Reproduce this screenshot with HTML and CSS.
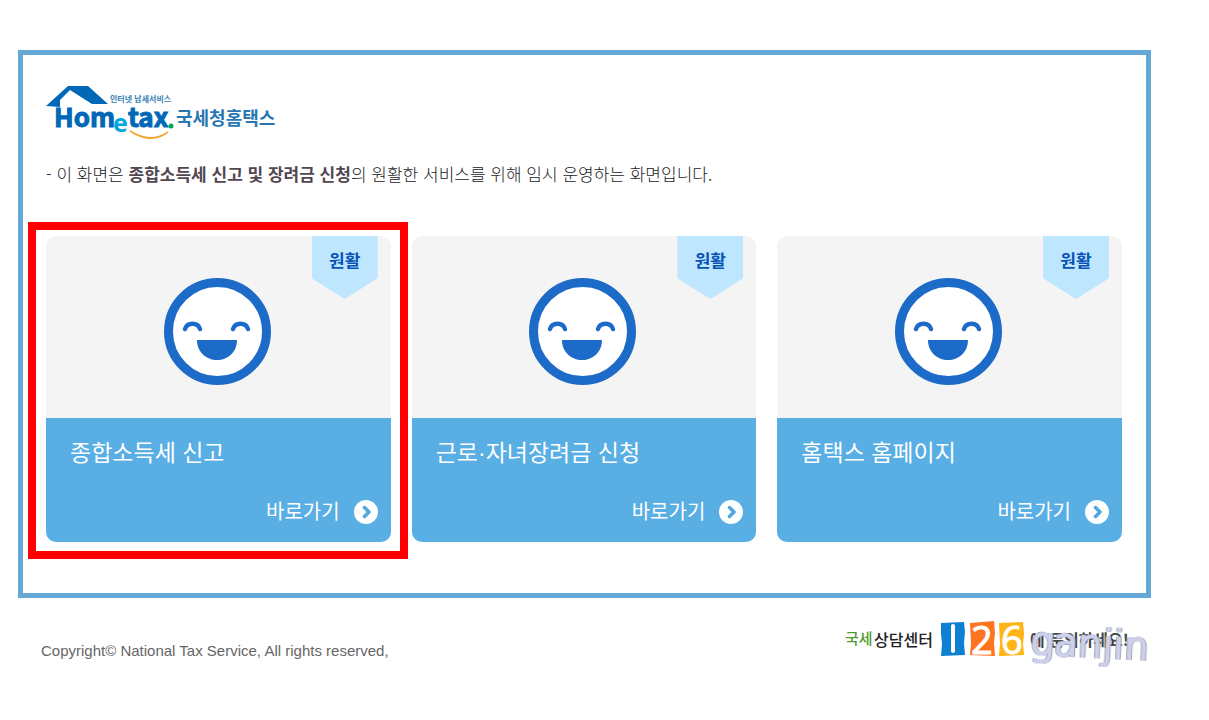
FILE: index.html
```html
<!DOCTYPE html>
<html lang="ko">
<head>
<meta charset="utf-8">
<meta name="viewport" content="width=device-width, initial-scale=1">
<title>국세청 홈택스</title>
<link rel="stylesheet" href="styles.css">
</head>
<body>
<svg class="defs" aria-hidden="true">
  <symbol id="smile" viewBox="0 0 107 107">
    <circle cx="53.5" cy="53.5" r="49" fill="#fff" stroke="#1c6bc8" stroke-width="9"/>
    <path d="M21 51c2-7 13-7 15 0M69 51c2-7 13-7 15 0" fill="none" stroke="#1c6bc8" stroke-width="4.500" stroke-linecap="round"/>
    <path d="M33 62h40c0 12-9 20-20 20s-20-8-20-20z" fill="#1c6bc8"/>
  </symbol>
  <symbol id="go" viewBox="0 0 24 24">
    <circle cx="12" cy="12" r="12" fill="#fff"/>
    <path d="M10.500 7.500l4.500 4.500-4.500 4.500" fill="none" stroke="#4fa8df" stroke-width="3.500" stroke-linecap="round" stroke-linejoin="round"/>
  </symbol>
</svg>
<main class="frame">
  <h1 class="logo">
    <svg class="logo-art" viewBox="0 0 230 56" role="img" aria-label="Hometax 국세청홈택스">
      <path d="M0 21L22 1H42L62 19H46L24 5L14 15V22z" fill="#0068b7"/>
      <text x="8" y="42" class="logo-en">Hom</text>
      <text x="67" y="47" class="logo-e">e</text>
      <text x="82" y="42" class="logo-en">tax</text>
      <circle cx="125" cy="41" r="2.500" fill="#00a651"/>
      <path d="M84 46q20 13 38 1q-16 13-38-1z" fill="#f2a32c" stroke="#f2a32c" stroke-width="1.500"/>
      <text x="64" y="17" class="logo-tag">인터넷 납세서비스</text>
      <text x="130" y="40" class="logo-ko">국세청홈택스</text>
    </svg>
  </h1>
  <p class="notice">- 이 화면은 <strong>종합소득세 신고 및 장려금 신청</strong>의 원활한 서비스를 위해 임시 운영하는 화면입니다.</p>
  <ul class="cards">
    <li class="card marked">
      <div class="status"><svg class="face" aria-hidden="true"><use href="#smile"/></svg><span class="badge">원활</span></div>
      <div class="body"><h2 class="title">종합소득세 신고</h2><a class="link" href="#">바로가기<svg class="arrow" aria-hidden="true"><use href="#go"/></svg></a></div>
    </li>
    <li class="card">
      <div class="status"><svg class="face" aria-hidden="true"><use href="#smile"/></svg><span class="badge">원활</span></div>
      <div class="body"><h2 class="title">근로·자녀장려금 신청</h2><a class="link" href="#">바로가기<svg class="arrow" aria-hidden="true"><use href="#go"/></svg></a></div>
    </li>
    <li class="card">
      <div class="status"><svg class="face" aria-hidden="true"><use href="#smile"/></svg><span class="badge">원활</span></div>
      <div class="body"><h2 class="title">홈택스 홈페이지</h2><a class="link" href="#">바로가기<svg class="arrow" aria-hidden="true"><use href="#go"/></svg></a></div>
    </li>
  </ul>
</main>
<footer class="footer">
  <p class="copy">Copyright© National Tax Service, All rights reserved,</p>
  <svg class="center" viewBox="0 0 308 52" role="img" aria-label="국세상담센터 126에 문의하세요!">
    <text x="2" y="26" class="hand green">국세</text>
    <text x="31" y="28" class="hand">상담센터</text>
    <path d="M98 5l23-1 1 10-1 11 1 12-24 1 1-12-1-10z" fill="#0d80d3"/>
    <path d="M127 5l24-2 1 12-1 10 1 13-25-1 1-12z" fill="#ff7420"/>
    <path d="M156 5l24-1 1 12-1 10 1 11-25 1 1-13z" fill="#ffb515"/>
    <path d="M110 8v25" class="digit-bar"/>
    <text x="128" y="36" class="digit">2</text>
    <text x="158" y="36" class="digit">6</text>
    <text x="187" y="28" class="ask">에 문의하세요!</text>
    <text x="187" y="36" class="mark" transform="rotate(3 187 36)">ganjin</text>
  </svg>
</footer>
</body>
</html>
```
FILE: styles.css
```css
* { box-sizing: border-box; }
body {
  margin: 0;
  padding: 50px 58px 40px 18px;
  background: #fff;
  color: #444;
  font-family: "Liberation Sans", "Noto Sans CJK KR", sans-serif;
}
.defs { position: absolute; width: 0; height: 0; }
.frame { border: 5px solid #65a8d5; padding: 30px 24px 51px 23px; }
.logo { margin: 0; line-height: 0; }
.logo-art { width: 230px; height: 56px; overflow: visible; }
.logo-en { font: bold 26px "Noto Sans CJK KR", sans-serif; fill: #0068b7; stroke: #0068b7; stroke-width: 1; }
.logo-e { font: bold 25px "Open Sans", sans-serif; fill: #00a5e3; }
.logo-tag { font: bold 8px "Noto Sans CJK KR", sans-serif; fill: #3b83b5; }
.logo-ko { font: bold 18px "Noto Sans CJK KR", sans-serif; fill: #2876b2; }
.notice { margin: 21px 0 0; color: #222; font-size: 17px; line-height: 24px; font-family: "Noto Sans CJK KR", sans-serif; font-weight: 300; }
.notice strong { font-weight: 700; color: #524650; }
.cards {
  display: grid;
  grid-template-columns: repeat(3, minmax(0, 1fr));
  gap: 21px;
  margin: 50px 0 0;
  padding: 0;
  list-style: none;
}
.card { position: relative; }
.marked::after { content: ""; position: absolute; inset: -14px -17px -17px -18px; border: 8px solid #f00; pointer-events: none; }
.status {
  position: relative;
  display: flex;
  justify-content: center;
  padding: 42px 2px 33px 0;
  border-radius: 10px 10px 0 0;
  background: #f4f4f4;
}
.face { width: 107px; height: 107px; }
.badge {
  position: absolute;
  top: 0;
  right: 13px;
  width: 66px;
  height: 63px;
  padding-top: 14px;
  background: #bfe6ff;
  clip-path: polygon(0 0, 100% 0, 100% 67%, 50% 100%, 0 67%);
  color: #0753b5;
  font-size: 17px;
  font-weight: 700;
  line-height: 24px;
  text-align: center;
}
.body {
  display: flex;
  flex-direction: column;
  padding: 19px 13px 16px 24px;
  border-radius: 0 0 10px 10px;
  background: #59aee4;
  color: #fff;
}
.title { margin: 0; font-size: 23px; font-weight: 400; line-height: 32px; }
.link {
  display: flex;
  align-items: center;
  align-self: flex-end;
  gap: 14px;
  margin-top: 29px;
  color: #fff;
  font-size: 20px;
  line-height: 28px;
  text-decoration: none;
}
.arrow { width: 24px; height: 24px; }
.footer { display: flex; justify-content: space-between; align-items: flex-start; padding: 20px 0 0 23px; }
.copy { margin: 23px 0 0; color: #666; font-size: 15px; line-height: 20px; }
.center { width: 308px; height: 52px; overflow: visible; }
.hand { font: 500 16px "Noto Sans CJK KR", sans-serif; fill: #222; }
.green { font-size: 15px; fill: #4d9c35; }
.digit-bar { stroke: #fff; stroke-width: 4; stroke-linecap: round; }
.digit { font: 38px "Open Sans", sans-serif; fill: #fff; stroke: #fff; stroke-width: 1; }
.ask { font: bold 16px "Noto Sans CJK KR", sans-serif; fill: #444; }
.mark {
  font: 200 39px "DejaVu Sans", sans-serif;
  fill: #ccd1ee;
  stroke: #ccd1ee;
  stroke-width: 2;
  stroke-linejoin: round;
  filter: drop-shadow(1px 0 0 #a4a4b0) drop-shadow(-1px 0 0 #a4a4b0);
}
```
